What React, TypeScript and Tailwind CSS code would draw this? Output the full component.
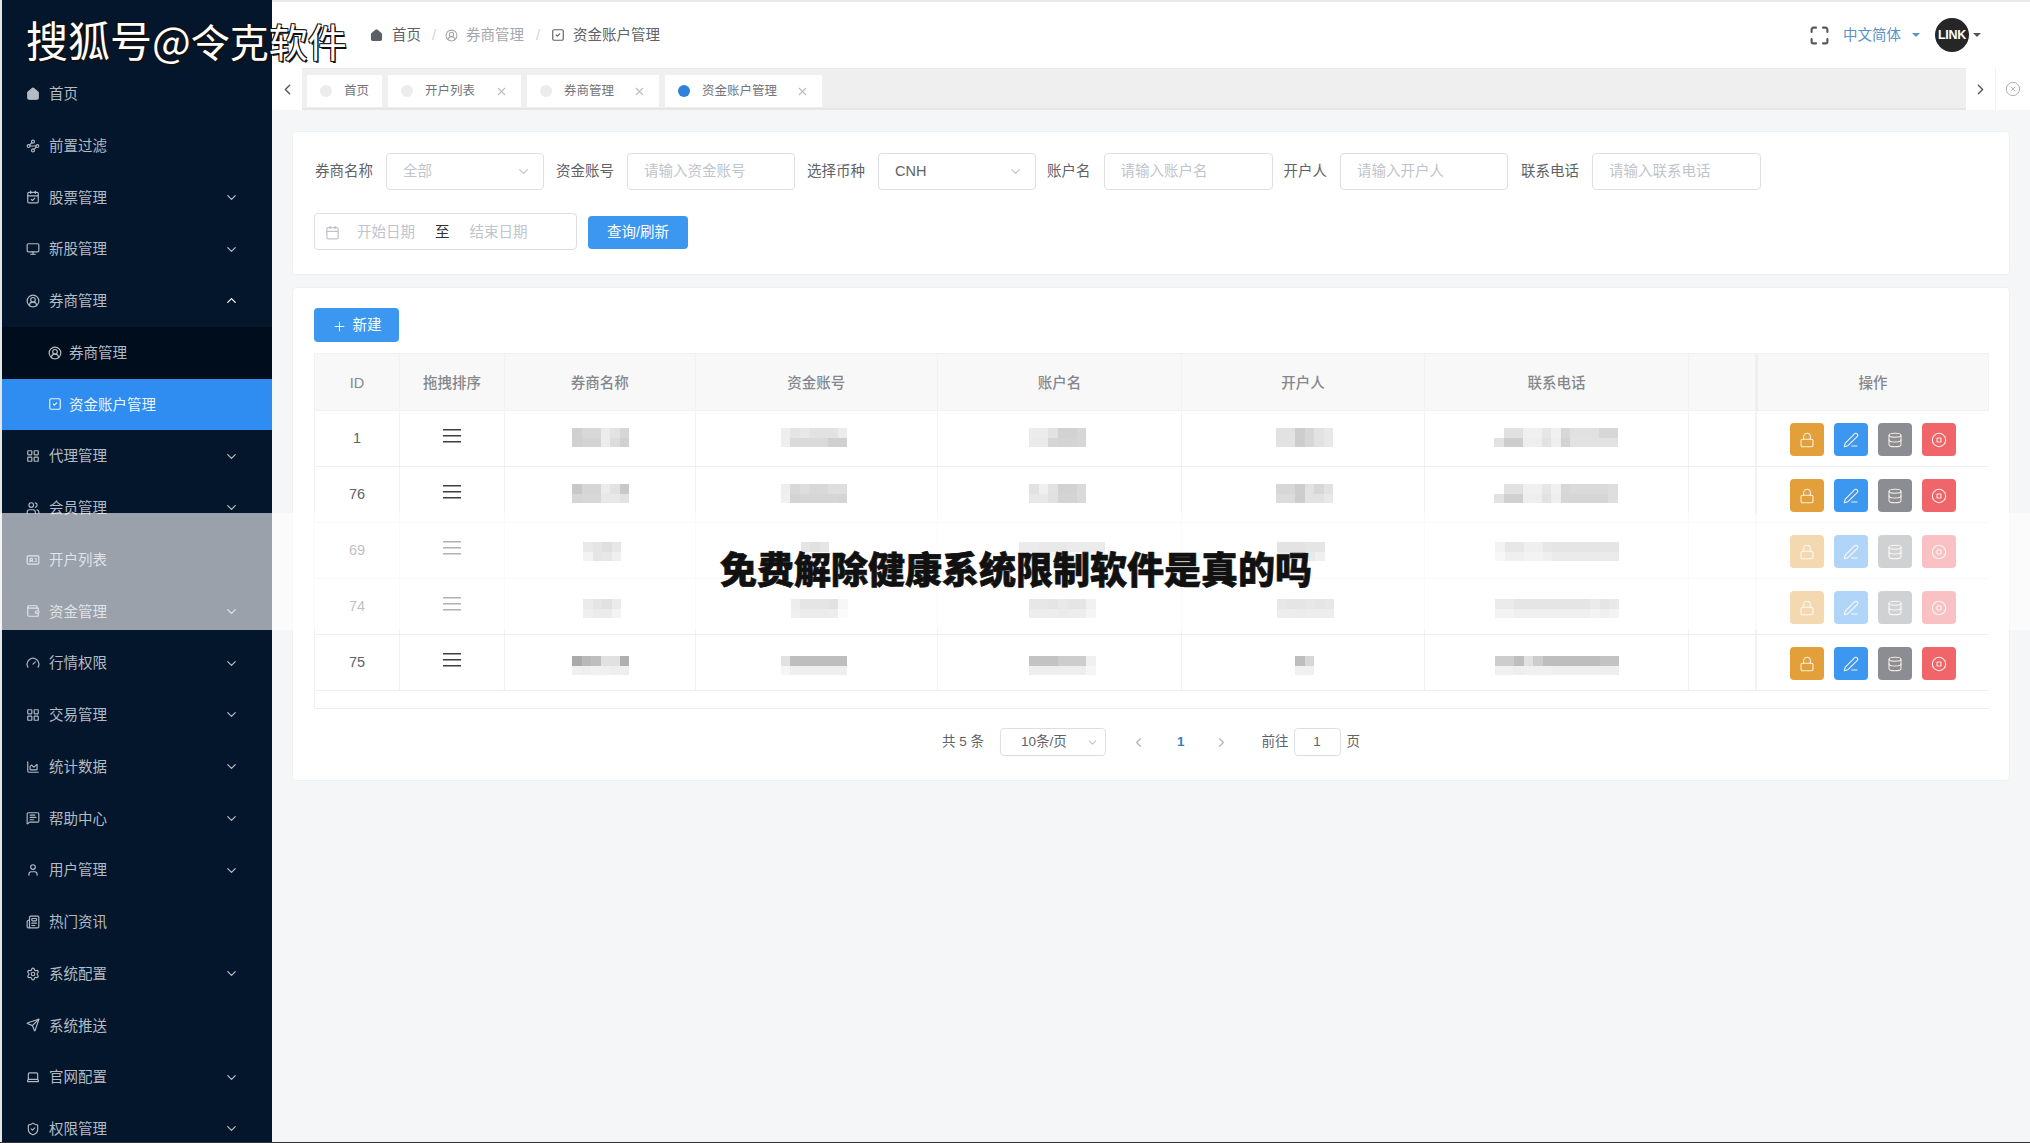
import React from "react";
import {
  House, Waypoints, CalendarCheck, Monitor, CircleUserRound, LayoutGrid, Users, IdCard, Wallet, Gauge,
  ChartArea, MessageSquareText, User, Newspaper, Settings, Send, Laptop, ShieldCheck, ChevronDown, ChevronUp,
  ChevronLeft, ChevronRight, X, CircleX, Calendar, Plus, Lock, PenLine, Database, CircleStop, Maximize, SquareCheck,
} from "lucide-react";

type MenuItem = { label: string; Icon: React.ElementType; arrow?: "down" | "up"; kind?: "sub" | "active"; filled?: boolean };

const menu: MenuItem[] = [
  { label: "首页", Icon: House, filled: true },
  { label: "前置过滤", Icon: Waypoints },
  { label: "股票管理", Icon: CalendarCheck, arrow: "down" },
  { label: "新股管理", Icon: Monitor, arrow: "down" },
  { label: "券商管理", Icon: CircleUserRound, arrow: "up" },
  { label: "券商管理", Icon: CircleUserRound, kind: "sub" },
  { label: "资金账户管理", Icon: SquareCheck, kind: "active" },
  { label: "代理管理", Icon: LayoutGrid, arrow: "down" },
  { label: "会员管理", Icon: Users, arrow: "down" },
  { label: "开户列表", Icon: IdCard },
  { label: "资金管理", Icon: Wallet, arrow: "down" },
  { label: "行情权限", Icon: Gauge, arrow: "down" },
  { label: "交易管理", Icon: LayoutGrid, arrow: "down" },
  { label: "统计数据", Icon: ChartArea, arrow: "down" },
  { label: "帮助中心", Icon: MessageSquareText, arrow: "down" },
  { label: "用户管理", Icon: User, arrow: "down" },
  { label: "热门资讯", Icon: Newspaper },
  { label: "系统配置", Icon: Settings, arrow: "down" },
  { label: "系统推送", Icon: Send },
  { label: "官网配置", Icon: Laptop, arrow: "down" },
  { label: "权限管理", Icon: ShieldCheck, arrow: "down" },
];

function Sidebar() {
  return (
    <aside className="w-[272px] shrink-0 border-l-2 border-[#e4e6e8] bg-[#03162c] flex flex-col h-[1143px] overflow-hidden">
      <div className="h-[68px] shrink-0" />
      {menu.map((m, i) => {
        const isActive = m.kind === "active";
        const isSub = m.kind === "sub";
        const nested = isActive || isSub;
        return (
          <div
            key={i}
            className={
              "h-[51.75px] shrink-0 flex items-center text-[14.5px] " +
              (isActive
                ? "bg-[#2f8cf0] text-[#eaf4ff] pl-[46px] "
                : isSub
                ? "bg-[#000d1d] text-[#b4bbc3] pl-[46px] "
                : "text-[#b4bbc3] pl-[24px] ")
            }
          >
            <m.Icon size={14} strokeWidth={2} className={"shrink-0 " + (m.filled ? "fill-current" : "")} />
            <span className={"pt-[1px] leading-none " + (nested ? "ml-[7px]" : "ml-[9px]")}>{m.label}</span>
            {m.arrow === "down" && <ChevronDown size={15} strokeWidth={2} className="ml-auto mr-[33px]" />}
            {m.arrow === "up" && <ChevronUp size={15} strokeWidth={2} className="ml-auto mr-[33px] text-white" />}
          </div>
        );
      })}
    </aside>
  );
}

function Caret({ className }: { className: string }) {
  return <span className={"w-0 h-0 border-x-[4px] border-x-transparent border-t-[4px] " + className} />;
}

function Header() {
  return (
    <header className="h-[68px] shrink-0 bg-white border-t-2 border-[#e8e9eb] flex items-center pl-[98px] pr-[49px] text-[14.5px]">
      <House size={13} strokeWidth={2.5} className="text-[#5c6066] fill-[#5c6066]" />
      <span className="ml-[9px] pt-[2px] text-[#606266]">首页</span>
      <span className="ml-[11px] pt-[2px] text-[#d3d5d9]">/</span>
      <CircleUserRound size={13} className="ml-[9px] text-[#a4a7ad]" />
      <span className="ml-[8px] pt-[2px] text-[#a4a7ad]">券商管理</span>
      <span className="ml-[12px] pt-[2px] text-[#d3d5d9]">/</span>
      <SquareCheck size={14} className="ml-[11px] text-[#5c6066]" />
      <span className="ml-[8px] pt-[2px] text-[#606266]">资金账户管理</span>
      <Maximize size={21} strokeWidth={2.4} className="ml-auto text-[#55595f]" />
      <span className="ml-[13px] pt-[2px] text-[#5c93c4]">中文简体</span>
      <Caret className="ml-[11px] border-t-[#5c93c4]" />
      <div className="ml-[15px] w-[34px] h-[34px] rounded-full bg-[#262626] flex items-center justify-center text-white text-[12.5px] font-bold tracking-tight">
        LINK
      </div>
      <Caret className="ml-[4px] border-t-[#555]" />
    </header>
  );
}

const tabs = [
  { label: "首页", w: "w-[75px]", ml: "ml-[5px]", close: false },
  { label: "开户列表", w: "w-[133px]", ml: "ml-[6px]", close: true },
  { label: "券商管理", w: "w-[132px]", ml: "ml-[6px]", close: true },
  { label: "资金账户管理", w: "w-[157px]", ml: "ml-[6px]", close: true, active: true },
];

function TabBar() {
  return (
    <div className="h-[42px] shrink-0 flex items-stretch bg-white">
      <div className="w-[30px] flex items-center justify-center text-[#55595f]">
        <ChevronLeft size={17} />
      </div>
      <div className="w-[1664px] bg-[#efefef] flex items-start pt-[6px] border-t border-b-2 border-t-[#e9e9e9] border-b-[#e6e6e6]">
        {tabs.map((t) => (
          <div key={t.label} className={"h-[32px] bg-white flex items-center pl-[13px] text-[12.5px] text-[#71757b] " + t.w + " " + t.ml}>
            <span className={"w-[12px] h-[12px] rounded-full " + (t.active ? "bg-[#2f80d8]" : "bg-[#ececec]")} />
            <span className="ml-[12px]">{t.label}</span>
            {t.close && <X size={13} className="ml-auto mr-[13px] text-[#b9bcc1]" />}
          </div>
        ))}
      </div>
      <div className="w-[30px] flex items-center justify-center text-[#55595f] border-r border-[#f0f1f2]">
        <ChevronRight size={17} />
      </div>
      <div className="flex-1 flex items-center justify-center text-[#a2a5aa]">
        <CircleX size={16} strokeWidth={1.3} />
      </div>
    </div>
  );
}

function Field({ label, text, placeholder, select, inputW, ml = "ml-3" }: { label: string; text?: string; placeholder?: string; select?: boolean; inputW: string; ml?: string }) {
  return (
    <>
      <span className={"text-[#606266] mr-[13px] whitespace-nowrap " + ml}>{label}</span>
      <div className={"h-[37px] border border-[#dcdfe6] rounded flex items-center pl-[16px] pr-[12px] " + inputW}>
        {text ? (
          <span className={placeholder ? "text-[#c0c4cc]" : "text-[#606266]"}>{text}</span>
        ) : (
          <span className="text-[#c0c4cc]">{placeholder}</span>
        )}
        {select && <ChevronDown size={15} className="ml-auto text-[#c0c4cc]" />}
      </div>
    </>
  );
}

function FilterCard() {
  return (
    <section className="h-[144px] bg-white border border-[#eef0f2] rounded-sm pl-[21px] pt-[21px] text-[14.5px]">
      <div className="flex items-center">
        <Field label="券商名称" text="全部" placeholder="全部" select inputW="w-[158px]" ml="ml-[1px]" />
        <Field label="资金账号" placeholder="请输入资金账号" inputW="w-[168px]" />
        <Field label="选择币种" text="CNH" select inputW="w-[158px]" />
        <Field label="账户名" placeholder="请输入账户名" inputW="w-[169px]" ml="ml-[11px]" />
        <Field label="开户人" placeholder="请输入开户人" inputW="w-[168px]" ml="ml-[11px]" />
        <Field label="联系电话" placeholder="请输入联系电话" inputW="w-[169px]" ml="ml-[13px]" />
      </div>
      <div className="flex items-center mt-[23px]">
        <div className="w-[263px] h-[37px] border border-[#dcdfe6] rounded flex items-center pl-[10px] pt-[2px]">
          <Calendar size={15} className="text-[#c0c4cc]" />
          <span className="ml-[17px] text-[#c0c4cc]">开始日期</span>
          <span className="ml-[20px] text-[#303133]">至</span>
          <span className="ml-[20px] text-[#c0c4cc]">结束日期</span>
        </div>
        <button className="ml-[11px] mt-[2px] w-[100px] h-[33px] rounded bg-[#3b97f0] text-white">查询/刷新</button>
      </div>
    </section>
  );
}

const columns = "grid grid-cols-[85px_105px_190.5px_242.5px_244px_243px_264px_67px_233px]";

type Block = { x: number; top: number[]; bot: number[] };

// Pixelated (redacted) values: [券商名称, 资金账号, 账户名, 开户人, 联系电话]; x is offset from the column's left line.
const mosaics: Block[][] = [
  [
    { x: 67, top: [208, 216, 216, 236, 226, 214], bot: [208, 212, 212, 236, 220, 208] },
    { x: 85, top: [238, 228, 232, 226, 226, 226, 236], bot: [238, 218, 218, 218, 218, 208, 208] },
    { x: 91, top: [236, 236, 226, 210, 210, 215], bot: [234, 234, 214, 212, 212, 215] },
    { x: 94, top: [226, 226, 205, 215, 226, 232], bot: [226, 226, 205, 215, 226, 232] },
    { x: 69, top: [255, 225, 225, 240, 240, 230, 240, 215, 225, 225, 225, 215, 215], bot: [226, 205, 205, 238, 238, 226, 238, 210, 226, 226, 226, 226, 226] },
  ],
  [
    { x: 67, top: [200, 214, 214, 236, 226, 200], bot: [214, 216, 216, 232, 232, 226] },
    { x: 85, top: [238, 216, 222, 216, 216, 222, 222], bot: [240, 212, 214, 214, 214, 214, 212] },
    { x: 91, top: [226, 240, 226, 210, 210, 218], bot: [232, 232, 225, 212, 212, 218] },
    { x: 94, top: [215, 215, 205, 226, 215, 226], bot: [220, 220, 205, 226, 226, 232] },
    { x: 69, top: [255, 225, 225, 240, 240, 230, 240, 215, 218, 218, 218, 218, 222], bot: [226, 208, 208, 238, 238, 226, 238, 214, 214, 214, 214, 214, 222] },
  ],
  [
    { x: 78, top: [200, 190, 175, 195], bot: [225, 190, 195, 215] },
    { x: 105, top: [190, 180, 190], bot: [235, 235, 235] },
    { x: 81, top: [205, 205, 200, 200, 200, 205, 205, 205, 205], bot: [235, 235, 235, 235, 235, 235, 235, 235, 235] },
    { x: 95, top: [185, 185, 185, 190, 190], bot: [200, 200, 200, 200, 215] },
    { x: 70, top: [225, 195, 195, 215, 215, 195, 190, 190, 190, 190, 190, 190, 190], bot: [235, 215, 215, 225, 225, 215, 205, 205, 205, 205, 205, 205, 205] },
  ],
  [
    { x: 78, top: [205, 190, 180, 205], bot: [215, 205, 205, 225] },
    { x: 95, top: [210, 190, 190, 190, 180, 235], bot: [215, 205, 205, 205, 210, 245] },
    { x: 91, top: [195, 195, 190, 200, 190, 190, 220], bot: [210, 210, 210, 205, 210, 210, 230] },
    { x: 95, top: [195, 190, 190, 195, 190, 195], bot: [210, 210, 205, 210, 210, 210] },
    { x: 70, top: [205, 205, 190, 190, 190, 190, 190, 190, 190, 190, 205, 190, 200], bot: [225, 225, 215, 215, 215, 215, 215, 215, 215, 215, 225, 215, 225] },
  ],
  [
    { x: 67, top: [170, 185, 190, 225, 225, 175], bot: [240, 238, 240, 240, 238, 238] },
    { x: 85, top: [225, 190, 190, 190, 190, 190, 190], bot: [245, 238, 238, 238, 238, 238, 238] },
    { x: 91, top: [195, 195, 195, 205, 205, 205, 240], bot: [238, 238, 238, 238, 238, 238, 245] },
    { x: 113, top: [190, 215], bot: [240, 240] },
    { x: 70, top: [205, 205, 190, 225, 205, 190, 190, 190, 190, 190, 190, 195, 195], bot: [240, 240, 238, 240, 240, 240, 238, 238, 238, 238, 238, 238, 238] },
  ],
];

const rowPad = ["pt-[17px]", "pt-[17px]", "pt-[19px]", "pt-[20px]", "pt-[21px]"];

function gray(v: number) {
  return `rgb(${v},${v},${v})`;
}

function Mosaic({ block }: { block: Block }) {
  return (
    <div className="flex flex-col blur-[0.5px]" style={{ marginLeft: block.x }}>
      {[block.top, block.bot].map((line, i) => (
        <div key={i} className="flex">
          {line.map((v, j) => (
            <span key={j} className="w-[9.5px] h-[9.5px]" style={{ backgroundColor: gray(v) }} />
          ))}
        </div>
      ))}
    </div>
  );
}

function DragHandle() {
  return (
    <svg width="18" height="14" viewBox="0 0 18 14" className="text-[#3d3f43]">
      <rect x="0" y="0" width="18" height="1.5" fill="currentColor" />
      <rect x="0" y="6" width="18" height="1.5" fill="currentColor" />
      <rect x="0" y="12" width="18" height="1.5" fill="currentColor" />
    </svg>
  );
}

const actions = [
  { bg: "bg-[#e3a03a]", Icon: Lock },
  { bg: "bg-[#3b97f0]", Icon: PenLine },
  { bg: "bg-[#8b8d92]", Icon: Database },
  { bg: "bg-[#f0656a]", Icon: CircleStop },
];

const headers = ["ID", "拖拽排序", "券商名称", "资金账号", "账户名", "开户人", "联系电话", "", "操作"];
const ids = ["1", "76", "69", "74", "75"];

function DataTable() {
  const cell = "border-r border-[#f0f2f5]";
  return (
    <div className="w-[1675px] mt-[11px] border-t border-l border-[#eef0f2] text-[14.5px]">
      <div className={columns + " h-[57px] bg-[#f8f8f9] border-b border-[#eef0f4] text-[#85878c] font-medium"}>
        {headers.map((h, i) => (
          <div key={i} className={cell + " flex items-center justify-center pt-[3px] " + (i === 8 ? "border-l-2 border-l-[#eceef1]" : "")}>
            {h}
          </div>
        ))}
      </div>
      {ids.map((id, r) => (
        <div key={id} className={columns + " h-[56px] border-b border-[#ebeef5]"}>
          <div className={cell + " flex items-center justify-center pt-[1px] text-[#606266]"}>{id}</div>
          <div className={cell + " flex justify-center pt-[18px]"}>
            <DragHandle />
          </div>
          {mosaics[r].map((b, c) => (
            <div key={c} className={cell + " flex items-start " + rowPad[r]}>
              <Mosaic block={b} />
            </div>
          ))}
          <div className={cell} />
          <div className="border-l border-[#f2f3f5] flex items-start gap-[10.5px] pl-[33px] pt-[12px]">
            {actions.map(({ bg, Icon }, k) => (
              <div key={k} className={"w-[33.5px] h-[33px] rounded flex items-center justify-center text-[#f7f0e4] " + bg}>
                <Icon size={16} strokeWidth={1.6} />
              </div>
            ))}
          </div>
        </div>
      ))}
      <div className="h-[18px] border-b border-[#ebeef5]" />
    </div>
  );
}

function Pagination() {
  return (
    <div className="flex items-center justify-center mt-[19px] text-[13.5px] text-[#606266]">
      <span>共 5 条</span>
      <div className="ml-[16px] w-[106px] h-[28px] border border-[#dcdfe6] rounded flex items-center pl-[20px] pr-[6px]">
        <span>10条/页</span>
        <ChevronDown size={13} className="ml-auto text-[#c0c4cc]" />
      </div>
      <ChevronLeft size={15} className="ml-[25px] text-[#b4b7bd]" />
      <span className="ml-[31px] text-[#3a7fc0] font-bold">1</span>
      <ChevronRight size={15} className="ml-[29px] text-[#b4b7bd]" />
      <span className="ml-[33px]">前往</span>
      <div className="ml-[5px] w-[47px] h-[28px] border border-[#dcdfe6] rounded flex items-center justify-center">1</div>
      <span className="ml-[6px]">页</span>
    </div>
  );
}

function ListCard() {
  return (
    <section className="h-[494px] mt-[12px] bg-white border border-[#eef0f2] rounded-sm pl-[21px] pr-[21px] pt-[20px]">
      <button className="w-[85px] h-[34px] pt-[2px] rounded bg-[#3b97f0] text-white flex items-center justify-center text-[14.5px]">
        <Plus size={15} strokeWidth={1.6} />
        <span className="ml-[6px]">新建</span>
      </button>
      <DataTable />
      <Pagination />
    </section>
  );
}

export default function App() {
  return (
    <div className="relative w-[2030px] h-[1143px] overflow-hidden flex bg-[#f5f6f8] border-b border-[#333] font-['Liberation_Sans','Noto_Sans_CJK_SC',sans-serif]">
      <Sidebar />
      <main className="flex-1 flex flex-col min-w-0">
        <Header />
        <TabBar />
        <div className="px-[20px] pt-[21px]">
          <FilterCard />
          <ListCard />
        </div>
      </main>

      {/* Watermark overlays burnt into the picture */}
      <div className="absolute left-[26px] top-[13px] leading-[52px] text-white whitespace-nowrap font-['Noto_Sans_CJK_SC',sans-serif] [text-shadow:1.5px_1.5px_0_#111,-1px_-1px_0_#111,1px_-1px_0_#111,-1px_1px_0_#111]">
        <span className="text-[42px]">搜狐号</span>
        <span className="text-[41px]">@</span>
        <span className="text-[39px]">令克软件</span>
      </div>
      <div className="absolute left-0 right-0 top-[513px] h-[117px] bg-white/60 flex items-center justify-center pb-[7px] pl-[2px]">
        <span className="text-[37px] leading-none font-black text-[#111] whitespace-nowrap font-['Noto_Sans_CJK_SC',sans-serif] [-webkit-text-stroke:0.7px_#111]">
          免费解除健康系统限制软件是真的吗
        </span>
      </div>
    </div>
  );
}
